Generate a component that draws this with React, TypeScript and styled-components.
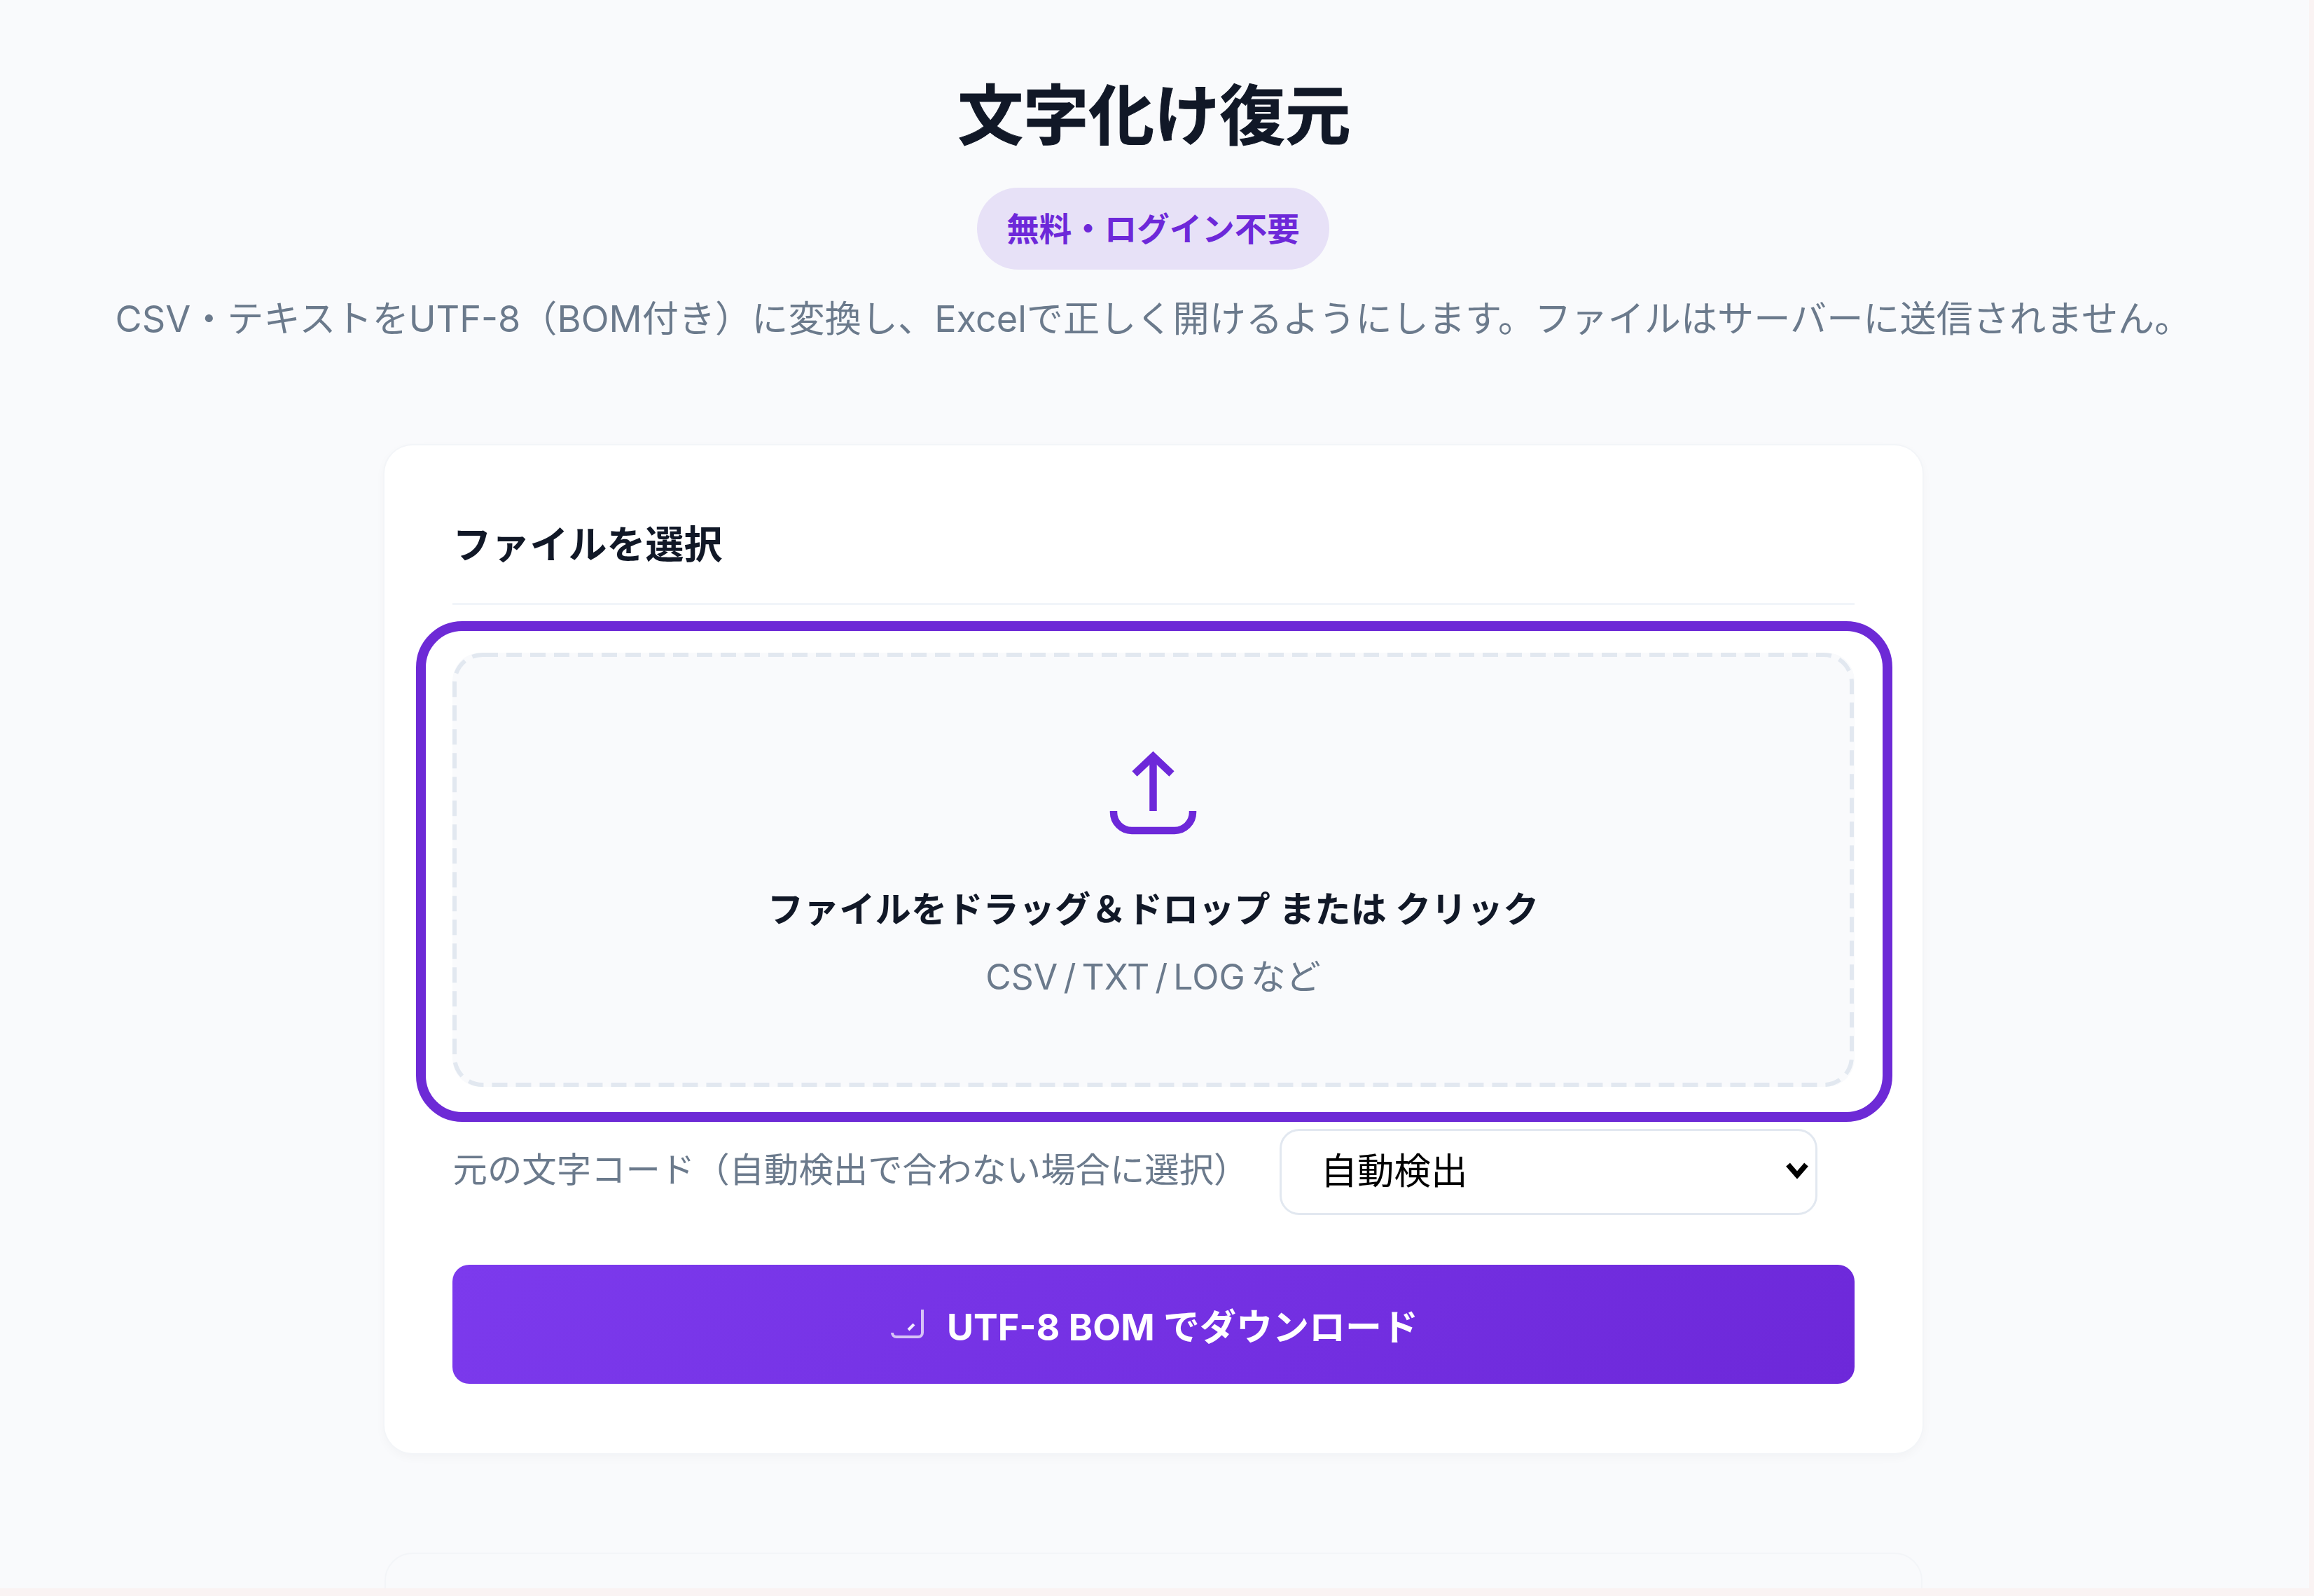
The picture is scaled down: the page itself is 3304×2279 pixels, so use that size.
import { createGlobalStyle } from "styled-components";
import styled from "styled-components";

const GlobalStyle = createGlobalStyle`
  html, body {
    margin: 0;
    padding: 0;
    background: #faf3f3;
  }
  body {
    font-family: "Inter", "Noto Sans CJK JP", sans-serif;
    color: #0f172a;
  }
`;

const Page = styled.div`
  box-sizing: border-box;
  width: 3297px;
  height: 2268px;
  padding-right: 4px;
  overflow: hidden;
  background: #f9fafc;
`;

const Header = styled.header`
  display: flex;
  flex-direction: column;
  align-items: center;
  padding-top: 110px;
`;

const Title = styled.h1`
  margin: 0;
  padding-left: 3px;
  font-size: 93.5px;
  line-height: 110px;
  font-weight: 700;
  color: #111827;
  -webkit-text-stroke: 1px #111827;
`;

const Badge = styled.span`
  margin-top: 48px;
  height: 117px;
  padding: 0 42px 6px;
  box-sizing: border-box;
  display: flex;
  align-items: center;
  border-radius: 59px;
  background: #e7e1f7;
  color: #6d28d9;
  font-size: 46.5px;
  font-weight: 700;
`;

const Subtitle = styled.p`
  margin: 35px 0 0;
  font-size: 52.2px;
  line-height: 70px;
  color: #6b7a8c;
  white-space: nowrap;
`;

const Card = styled.section`
  box-sizing: border-box;
  width: 2196px;
  margin: 146px auto 0;
  padding: 100px 97px 99px;
  background: #fff;
  border-radius: 40px;
  box-shadow: 0 0 0 2px #f3f5f8, 0 5px 16px rgba(15, 23, 42, 0.035);
`;

const GhostCard = styled.div`
  box-sizing: border-box;
  width: 2196px;
  height: 300px;
  margin: 142px auto 0;
  border: 2px solid #f3f5f8;
  border-radius: 40px;
`;

const SectionTitle = styled.h2`
  margin: 0;
  padding: 0 0 43px 1px;
  border-bottom: 3px solid #f1f5f9;
  font-size: 55px;
  line-height: 82px;
  font-weight: 700;
  color: #111827;
`;

const DropZone = styled.div`
  position: relative;
  box-sizing: border-box;
  height: 620px;
  margin-top: 68px;
  padding-top: 136px;
  display: flex;
  flex-direction: column;
  align-items: center;
  background: #f9fafc;
  border-radius: 40px;

  &::after {
    content: "";
    position: absolute;
    inset: -45px -54px -50px -52px;
    border: 14px solid #6d2ad6;
    border-radius: 66px;
    pointer-events: none;
  }
`;

const DashedEdge = styled.svg`
  position: absolute;
  left: 0;
  top: 0;
  width: 2001px;
  height: 620px;

  rect {
    fill: none;
    stroke: #e2e8f0;
    stroke-width: 6px;
    stroke-dasharray: 22 12;
  }
`;

const UploadGlyph = styled.svg`
  position: relative;
  width: 135px;
  height: 128px;
  fill: none;
  stroke: #6d28d9;
  stroke-width: 10.5px;
`;

const DropHeading = styled.div`
  position: relative;
  margin-top: 67px;
  font-size: 51.3px;
  line-height: 70px;
  font-weight: 700;
  color: #111827;
`;

const DropHint = styled.div`
  position: relative;
  margin-top: 27px;
  font-size: 50px;
  line-height: 70px;
  word-spacing: -6px;
  color: #6b7a8c;
`;

const EncodingRow = styled.div`
  display: flex;
  align-items: center;
  gap: 45px;
  margin-top: 60px;
`;

const EncodingLabel = styled.label`
  padding: 0 0 7px 1px;
  font-size: 49.4px;
  line-height: 70px;
  color: #6b7a8c;
  white-space: nowrap;
`;

const SelectWrap = styled.div`
  position: relative;
  width: 768px;
  height: 123px;
`;

const EncodingSelect = styled.select`
  box-sizing: border-box;
  width: 100%;
  height: 100%;
  padding: 0 80px 3px 55px;
  appearance: none;
  border: 3px solid #e2e8f0;
  border-radius: 28px;
  background: #fff;
  color: #000;
  font-family: inherit;
  font-size: 52.5px;
`;

const SelectChevron = styled.svg`
  position: absolute;
  right: 13px;
  top: 47px;
  width: 32px;
  height: 24px;
  fill: none;
  stroke: #000;
  stroke-width: 7.5px;
  pointer-events: none;
`;

const DownloadButton = styled.button`
  width: 100%;
  height: 170px;
  margin-top: 71px;
  padding-left: 10px;
  display: flex;
  align-items: center;
  justify-content: center;
  gap: 32px;
  border: 0;
  border-radius: 24px;
  background: linear-gradient(135deg, #7c3aed, #6d28d9 100%);
  color: #fff;
  font-family: inherit;
  font-size: 52px;
  font-weight: 700;
`;

const BrokenGlyph = styled.svg`
  width: 48px;
  height: 44px;
  fill: none;
`;

export default function App() {
  return (
    <>
      <GlobalStyle />
      <Page>
        <Header>
          <Title>文字化け復元</Title>
          <Badge>無料・ログイン不要</Badge>
          <Subtitle>
            CSV・テキストをUTF-8（BOM付き）に変換し、Excelで正しく開けるようにします。ファイルはサーバーに送信されません。
          </Subtitle>
        </Header>
        <Card>
          <SectionTitle>ファイルを選択</SectionTitle>
          <DropZone>
            <DashedEdge viewBox="0 0 2001 620">
              <rect x="3" y="3" width="1995" height="614" rx="40" />
            </DashedEdge>
            <UploadGlyph viewBox="0 0 135 128">
              <path d="M67.5 90V14" />
              <path d="M41 37L67.5 12L94 37" />
              <path d="M11 90v2a26 26 0 0 0 26 26h61a26 26 0 0 0 26-26v-2" />
            </UploadGlyph>
            <DropHeading>ファイルをドラッグ＆ドロップ または クリック</DropHeading>
            <DropHint>CSV / TXT / LOG など</DropHint>
          </DropZone>
          <EncodingRow>
            <EncodingLabel>元の文字コード（自動検出で合わない場合に選択）</EncodingLabel>
            <SelectWrap>
              <EncodingSelect defaultValue="auto">
                <option value="auto">自動検出</option>
                <option value="sjis">Shift_JIS</option>
                <option value="euc">EUC-JP</option>
              </EncodingSelect>
              <SelectChevron viewBox="0 0 32 24">
                <path d="M3 4L16 19L29 4" />
              </SelectChevron>
            </SelectWrap>
          </EncodingRow>
          <DownloadButton>
            <BrokenGlyph viewBox="0 0 48 44">
              <path
                d="M45 1v33a6 6 0 0 1-6 6H8a6 6 0 0 1-6-6"
                stroke="#d6c2f6"
                strokeWidth="4"
              />
              <path d="M25 30L33 22" stroke="#f3edff" strokeWidth="4" />
            </BrokenGlyph>
            UTF-8 BOM でダウンロード
          </DownloadButton>
        </Card>
        <GhostCard />
      </Page>
    </>
  );
}
